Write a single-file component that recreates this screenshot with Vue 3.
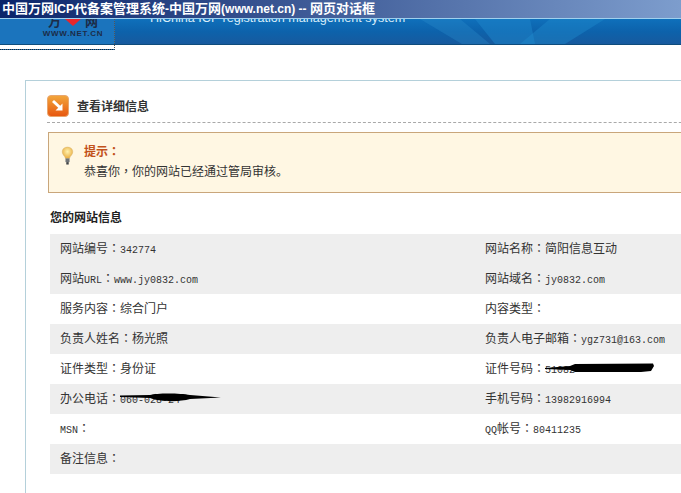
<script setup>
const rows = [
  { shade: true, left: [['网站编号'], ['c'], ['m', '342774']], right: [['网站名称'], ['c'], ['', '简阳信息互动']] },
  { shade: true, left: [['网站'], ['m', 'URL'], ['c'], ['m', 'www.jy0832.com']], right: [['网站域名'], ['c'], ['m', 'jy0832.com']] },
  { shade: false, left: [['服务内容'], ['c'], ['', '综合门户']], right: [['内容类型'], ['c']] },
  { shade: true, left: [['负责人姓名'], ['c'], ['', '杨光照']], right: [['负责人电子邮箱'], ['c'], ['m', 'ygz731@163.com']] },
  { shade: false, left: [['证件类型'], ['c'], ['', '身份证']], right: [['证件号码'], ['c'], ['m', '51082']], redactRight: true },
  { shade: true, left: [['办公电话'], ['c'], ['m', '060-028-24']], right: [['手机号码'], ['c'], ['m', '13982916994']], redactLeft: true },
  { shade: false, left: [['m', 'MSN'], ['c']], right: [['m', 'QQ'], ['帐号'], ['c'], ['m', '80411235']] },
  { shade: true, left: [['备注信息'], ['c']], right: [] }
]
function cls(seg) {
  if (seg[0] === 'c') return 'colon'
  if (seg[0] === 'm') return 'mono'
  return ''
}
function txt(seg) {
  if (seg[0] === 'c') return '\uFF1A'
  if (seg.length === 2) return seg[1]
  return seg[0]
}
</script>

<template>
  <div class="page">
    <div class="titlebar">中国万网<span class="tl">ICP</span>代备案管理系统<span class="tl">-</span>中国万网<span class="tl">(www.net.cn) -- </span>网页对话框</div>
    <header class="banner">
      <svg class="streaks" width="300" height="25" viewBox="0 0 300 25">
        <polygon points="20,0 60,0 90,25 62,25" fill="#2a8ccb" opacity=".35" />
        <polygon points="75,0 130,0 135,25 95,25" fill="#1d84c8" opacity=".55" />
        <polygon points="150,0 205,0 165,25 120,25" fill="#1f8acb" opacity=".45" />
      </svg>
      <div class="logo">
        <div class="logo-top">
          <span>万</span>
          <svg width="16" height="7" viewBox="0 0 16 7"><polygon points="0,0 16,0 8,7" fill="#e8262c" /></svg>
          <span>网</span>
        </div>
        <div class="logo-url">WWW.NET.CN</div>
      </div>
      <div class="subtitle">HiChina ICP registration management system</div>
    </header>

    <section class="card">
      <div class="card-head">
        <svg class="arrow-icon" width="22" height="22" viewBox="0 0 22 22">
          <defs>
            <linearGradient id="og" x1="0" y1="0" x2="0" y2="1">
              <stop offset="0" stop-color="#f2a73c" />
              <stop offset="1" stop-color="#e7560f" />
            </linearGradient>
          </defs>
          <rect x=".5" y=".5" width="21" height="21" rx="3.5" fill="url(#og)" stroke="#e9a66d" />
          <path d="M6 6 L13 12.5" stroke="#fff" stroke-width="3" fill="none" />
          <path d="M15.5 8.5 V15.5 H8.5 Z" fill="#fff" />
        </svg>
        <h2>查看详细信息</h2>
      </div>

      <div class="tip">
        <svg class="bulb" width="13" height="22" viewBox="0 0 16 24">
          <defs>
            <radialGradient id="bg" cx=".5" cy=".4" r=".6">
              <stop offset="0" stop-color="#fff2b0" />
              <stop offset="1" stop-color="#e9ac3e" />
            </radialGradient>
          </defs>
          <path d="M8 1 C3.5 1 1.5 4 1.5 7 C1.5 10.5 5 12 5.5 15 H10.5 C11 12 14.5 10.5 14.5 7 C14.5 4 12.5 1 8 1 Z" fill="url(#bg)" stroke="#d9b878" stroke-width=".6" />
          <rect x="5.5" y="15" width="5" height="4.5" fill="#6f7478" />
          <rect x="6.5" y="19.5" width="3" height="3" fill="#3f4346" />
        </svg>
        <div class="tip-text">
          <div class="tip-title">提示<span class="colon">&#xFF1A;</span></div>
          <div class="tip-msg">恭喜你<span class="colon">&#xFF0C;</span>你的网站已经通过管局审核。</div>
        </div>
      </div>

      <h3>您的网站信息</h3>

      <div class="table">
        <div v-for="(row, i) in rows" :key="i" class="row" :class="{ shade: row.shade }">
          <div class="cell left">
            <span v-for="(seg, j) in row.left" :key="j" :class="cls(seg)">{{ txt(seg) }}</span>
            <svg v-if="row.redactLeft" class="scribble phone" width="102" height="10" viewBox="0 0 102 10">
              <path d="M0 3.5 L30 3 C36 1 60 1 70 3 L101 5.5 L70 7 C60 10 40 10 30 6 L0 5 Z" fill="#000" />
            </svg>
          </div>
          <div class="cell right">
            <span v-for="(seg, j) in row.right" :key="j" :class="cls(seg)">{{ txt(seg) }}</span>
            <svg v-if="row.redactRight" class="scribble cert" width="110" height="10" viewBox="0 0 110 10">
              <path d="M0 5 L25 3 L30 1 L108 .5 L109 3 L106 8 L96 9 L30 9 L25 7 L0 6 Z" fill="#000" />
            </svg>
          </div>
        </div>
      </div>
    </section>
  </div>
</template>

<style scoped>
.page {
  position: relative;
  width: 681px;
  height: 493px;
  overflow: hidden;
  background: #fff;
  font-family: "Noto Sans CJK SC", "Liberation Sans", sans-serif;
  font-size: 12px;
  color: #333;
}
.titlebar {
  position: relative;
  z-index: 2;
  height: 18px;
  border-bottom: 1px solid #9fd0ee;
  padding-left: 2px;
  background: linear-gradient(90deg, #0a246a 0%, #7d9dcd 100%);
  color: #fff;
  font-family: "Liberation Sans", "Noto Sans CJK SC", sans-serif;
  font-size: 13px;
  font-weight: 700;
  line-height: 18px;
  white-space: nowrap;
}
.tl {
  font-size: 12px;
}
.banner {
  position: relative;
  height: 25px;
  background: linear-gradient(180deg, #0f70bb 0%, #0d62ab 50%, #175a9e 100%);
  border-bottom: 1px solid #0e4c7c;
  display: flex;
}
.streaks {
  position: absolute;
  left: 400px;
  top: 0;
}
.logo {
  position: absolute;
  z-index: 1;
  left: 0;
  top: -5px;
  width: 82px;
  height: 35px;
  padding-left: 32px;
  border-right: 1px dotted #555;
  border-bottom: 1px dotted #222;
  overflow: hidden;
  background: linear-gradient(180deg, #1b74bd 0 30px, #0e4c7c 30px 31px, #fff 31px);
  display: flex;
  flex-direction: column;
  align-items: center;
}
.logo-top {
  display: flex;
  align-items: flex-start;
  gap: 4px;
  height: 15px;
  line-height: 13px;
  font-weight: 700;
  font-size: 13px;
  color: #1c2c48;
}
.logo-top svg {
  margin-top: 5px;
}
.logo-url {
  font-family: "Liberation Sans", sans-serif;
  font-size: 8px;
  line-height: 9px;
  font-weight: 700;
  letter-spacing: 0.7px;
  color: #1c2c48;
  white-space: nowrap;
}
.subtitle {
  margin-left: 150px;
  margin-top: -8px;
  height: 14px;
  line-height: 14px;
  font-family: "Liberation Sans", sans-serif;
  font-size: 12.6px;
  color: #d8ecf8;
  white-space: nowrap;
}
.card {
  margin: 35px 0 0 25px;
  border-top: 1px solid #b4d0da;
  border-left: 1px solid #b4d0da;
  padding: 14px 0 0 21px;
  width: 700px;
  height: 420px;
  box-sizing: border-box;
}
.card-head {
  display: flex;
  align-items: center;
  gap: 8px;
  height: 22px;
  padding-bottom: 5px;
  border-bottom: 1px dashed #a9a9a9;
  width: 700px;
}
.card-head h2 {
  margin: 0;
  font-size: 12px;
  font-weight: 700;
  color: #333;
  line-height: 22px;
}
.arrow-icon {
  flex: none;
}
.tip {
  margin: 9px 0 0 1px;
  height: 61px;
  width: 700px;
  box-sizing: border-box;
  border: 1px solid #c9a67b;
  background: #fff7e3;
  display: flex;
  padding: 12px 0 0 12px;
}
.bulb {
  flex: none;
}
.tip-text {
  margin: -3px 0 0 10px;
}
.tip-title {
  font-weight: 700;
  color: #c2521a;
  line-height: 18px;
}
.tip-msg {
  margin-top: 2px;
  line-height: 18px;
  color: #333;
}
h3 {
  margin: 15px 0 0 3px;
  font-size: 12px;
  font-weight: 700;
  line-height: 18px;
  color: #222;
}
.table {
  margin: 8px 0 0 3px;
  width: 700px;
}
.row {
  display: flex;
  height: 30px;
  line-height: 28px;
  white-space: nowrap;
}
.row.shade {
  background: #eeeeee;
}
.cell {
  position: relative;
  box-sizing: border-box;
}
.cell.left {
  width: 435px;
  padding-left: 10px;
}
.cell.right {
  flex: 1;
}
.mono {
  font-family: "Liberation Mono", monospace;
  font-size: 10px;
}
.colon {
  font-family: "Noto Sans CJK TC", sans-serif;
}
.scribble {
  position: absolute;
}
.phone {
  left: 70px;
  top: 8px;
}
.cert {
  left: 60px;
  top: 9px;
}
</style>
